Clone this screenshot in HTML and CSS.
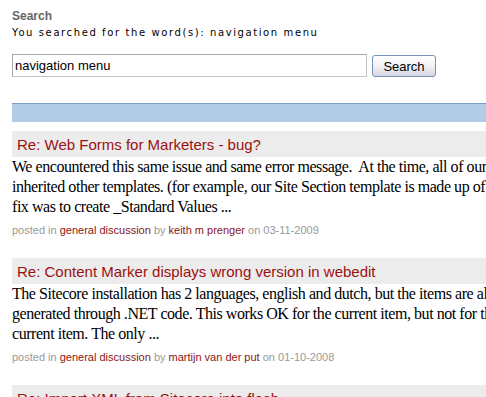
FILE: index.html
```html
<!DOCTYPE html>
<html>
<head>
<meta charset="utf-8">
<link rel="stylesheet" href="styles.css">
</head>
<body>
<div class="page">
  <h1 class="title">Search</h1>
  <p class="summary">You searched for the word(s): navigation menu</p>
  <form class="search-form">
    <input class="search-input" type="text" value="navigation menu">
    <button class="search-btn" type="button">Search</button>
  </form>
  <div class="results-bar"></div>
  <div class="results">
    <div class="result">
      <h2 class="result-title"><a href="#">Re: Web Forms for Marketers - bug?</a></h2>
      <p class="result-body">We encountered this same issue and same error message.&nbsp; At the time, all of our Page templates<br>inherited other templates. (for example, our Site Section template is made up of a Base Page template.)&nbsp; The<br>fix was to create _Standard Values ...</p>
      <p class="result-meta">posted in <a href="#">general discussion</a> by <a href="#">keith m prenger</a> on 03-11-2009</p>
    </div>
    <div class="result">
      <h2 class="result-title"><a href="#">Re: Content Marker displays wrong version in webedit</a></h2>
      <p class="result-body">The Sitecore installation has 2 languages, english and dutch, but the items are all created<br>generated through .NET code. This works OK for the current item, but not for the children of the<br>current item. The only ...</p>
      <p class="result-meta">posted in <a href="#">general discussion</a> by <a href="#">martijn van der put</a> on 01-10-2008</p>
    </div>
    <div class="result">
      <h2 class="result-title"><a href="#">Re: Import XML from Sitecore into flash</a></h2>
      <p class="result-body">The XML is generated by a layout in Sitecore ...</p>
    </div>
  </div>
</div>
</body>
</html>
```

FILE: styles.css
```css
html {
  overflow: hidden;
}
body {
  margin: 0;
  background: #ffffff;
  font-family: "Liberation Sans", Arial, sans-serif;
}
.page {
  padding: 9px 0 0 12px;
  width: 780px;
}
.title {
  margin: 0;
  font-size: 12px;
  line-height: 14px;
  font-weight: bold;
  color: #666666;
}
.summary {
  margin: 3px 0 0 0;
  font-family: "DejaVu Sans", Verdana, sans-serif;
  font-size: 10px;
  line-height: 13px;
  letter-spacing: 1.6px;
  color: #000000;
}
.search-form {
  display: flex;
  align-items: flex-end;
  gap: 5px;
  margin: 15px 0 0 0;
}
.search-input {
  box-sizing: border-box;
  width: 355px;
  height: 23px;
  margin: 0;
  padding: 0 2px;
  border: 1px solid #c4c4c4;
  border-top-color: #a8a8a8;
  border-left-color: #a8a8a8;
  font-family: "Liberation Sans", Arial, sans-serif;
  font-size: 13px;
  color: #000;
}
.search-btn {
  box-sizing: border-box;
  width: 64px;
  height: 22px;
  margin: 0;
  padding: 0;
  border: 1px solid #7592b8;
  border-radius: 3px;
  background: linear-gradient(#ffffff, #f1f1f5 50%, #d8d8e4);
  font-family: "Liberation Sans", Arial, sans-serif;
  font-size: 13px;
  color: #000;
}
.results-bar {
  margin-top: 26px;
  height: 18px;
  border-top: 1px solid #7b9cc3;
  background: #b3cce6;
}
.results {
  margin-top: 9px;
}
.result {
  margin-bottom: 21px;
}
.result-title {
  margin: 0;
  padding: 5px 5px 3px 5px;
  background: #ececec;
  font-size: 15px;
  line-height: 18px;
  font-weight: normal;
}
.result-title a {
  color: #9b1111;
  text-decoration: none;
}
.result-body {
  margin: 0;
  font-family: "Liberation Serif", "Times New Roman", serif;
  font-size: 16px;
  line-height: 20px;
  letter-spacing: -0.45px;
  white-space: nowrap;
  color: #000;
}
.result-meta {
  margin: 6px 0 0 0;
  font-size: 11px;
  line-height: 14px;
  color: #999999;
}
.result-meta a {
  color: #8b1515;
  text-decoration: none;
}
```
